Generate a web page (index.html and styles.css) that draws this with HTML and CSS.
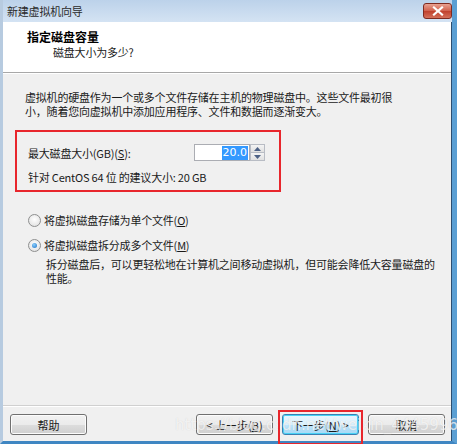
FILE: index.html
```html
<!DOCTYPE html>
<html lang="zh-CN">
<head>
<meta charset="utf-8">
<title>新建虚拟机向导</title>
<link rel="stylesheet" href="styles.css">
</head>
<body>
<div class="window">
  <div class="titlebar">
    <span class="title">新建虚拟机向导</span>
    <span class="close"><svg width="12" height="10" viewBox="0 0 12 10"><path d="M2 1.5 L10 8.5 M10 1.5 L2 8.5" stroke="#fff" stroke-width="2.2" stroke-linecap="square"/></svg></span>
  </div>
  <div class="client">
    <div class="header">
      <div class="h-title">指定磁盘容量</div>
      <div class="h-sub">磁盘大小为多少?</div>
    </div>
    <div class="body">
      <p class="intro"><span>虚拟机的硬盘作为一个或多个文件存储在主机的物理磁盘中。这些文件最初很</span><span>小，随着您向虚拟机中添加应用程序、文件和数据而逐渐变大。</span></p>
      <div class="sizebox">
        <div class="size-row">
          <span class="label">最大磁盘大小(GB)(<u>S</u>):</span>
          <div class="spinner">
            <div class="spin-input"><span class="sel">20.0</span></div>
            <div class="spin-btns">
              <span class="spin-up"><svg width="7" height="4" viewBox="0 0 7 4"><path d="M0 4 L3.5 0 L7 4 Z" fill="#4d6185"/></svg></span>
              <span class="spin-down"><svg width="7" height="4" viewBox="0 0 7 4"><path d="M0 0 L3.5 4 L7 0 Z" fill="#4d6185"/></svg></span>
            </div>
          </div>
        </div>
        <div class="hint">针对 CentOS 64 位 的建议大小: 20 GB</div>
      </div>
      <div class="radios">
        <div class="radio-row"><span class="radio"></span><span>将虚拟磁盘存储为单个文件(<u>O</u>)</span></div>
        <div class="radio-row"><span class="radio checked"></span><span>将虚拟磁盘拆分成多个文件(<u>M</u>)</span></div>
        <p class="desc"><span>拆分磁盘后，可以更轻松地在计算机之间移动虚拟机，但可能会降低大容量磁盘的</span><span>性能。</span></p>
      </div>
    </div>
    <div class="footer">
      <button class="btn">帮助</button>
      <div class="nav">
        <button class="btn">&lt; 上一步(<u>B</u>)</button>
        <button class="btn default">下一步(<u>N</u>) &gt;</button>
        <button class="btn">取消</button>
      </div>
      <span class="watermark">https://blog.csdn.net/weixin_44459966</span>
    </div>
  </div>
</div>
</body>
</html>
```

FILE: styles.css
```css
* { box-sizing: border-box; }
html, body { margin: 0; padding: 0; }
body {
  width: 457px;
  height: 444px;
  overflow: hidden;
  background: #ffffff;
  font-family: "Noto Sans CJK SC", "Noto Sans", sans-serif;
  font-size: 11px;
  letter-spacing: -0.2px;
  color: #1a1a1a;
}
.window {
  position: relative;
  width: 457px;
  height: 444px;
  display: flex;
  flex-direction: column;
  background: linear-gradient(#bed3ea, #cfdff0);
  border-left: 3px solid #b7cbe0;
  border-right: 5px solid #5b9fd3;
  border-bottom: 3px solid #3f86c2;
}
.titlebar {
  height: 22px;
  display: flex;
  align-items: center;
  padding-left: 4px;
  background: linear-gradient(#bcd2ea, #d4e3f3);
}
.title {
  color: #2a2a2a;
  line-height: 14px;
}
.close {
  margin-left: auto;
  width: 29px;
  height: 16px;
  display: flex;
  align-items: center;
  justify-content: center;
  border: 1px solid #7e2a20;
  border-radius: 3px;
  background: linear-gradient(#e8a191, #d0604c 50%, #c0402c 51%, #d4705a);
}
.client {
  flex: 1;
  display: flex;
  flex-direction: column;
  background: #f0f0f0;
  border-right: 1px solid #2c4e70;
}
.header {
  height: 51px;
  background: #ffffff;
  border-bottom: 1px solid #a8a8a8;
  box-shadow: 0 1px 0 #ffffff;
  padding: 7px 0 0 24px;
}
.h-title {
  font-weight: bold;
  font-size: 12px;
  line-height: 15px;
  letter-spacing: 0;
  color: #000;
}
.h-sub {
  padding-left: 26px;
  line-height: 15px;
  margin-top: 1px;
}
.body {
  flex: 1;
  padding: 17px 0 0 22px;
}
.intro, .desc {
  margin: 0;
  line-height: 14px;
}
.intro span, .desc span {
  display: block;
  white-space: nowrap;
}
.sizebox {
  width: 266px;
  height: 62px;
  margin: 12px 0 0 -10px;
  border: 2px solid #e8262c;
  padding: 12px 14px 0 11px;
}
.size-row {
  display: flex;
  align-items: center;
  justify-content: space-between;
  height: 17px;
}
.label { line-height: 14px; white-space: nowrap; }
.spinner {
  display: flex;
  flex-shrink: 0;
}
.spin-input {
  width: 56px;
  height: 17px;
  background: #fff;
  border: 1px solid #abadb3;
  display: flex;
  justify-content: flex-end;
  align-items: center;
  padding-right: 1px;
}
.sel {
  background: #3399ff;
  color: #fff;
  font-family: "DejaVu Sans", "Noto Sans", sans-serif;
  font-size: 11px;
  letter-spacing: 0;
  line-height: 14px;
  padding: 0 1px;
}
.spin-btns {
  width: 15px;
  height: 17px;
  display: flex;
  flex-direction: column;
}
.spin-up, .spin-down {
  flex: 1;
  display: flex;
  align-items: center;
  justify-content: center;
  border: 1px solid #b8bcc4;
  background: linear-gradient(#f4f4f4, #e0e0e0);
}
.spin-down { border-top: none; }
.hint {
  margin-top: 9px;
  line-height: 14px;
  white-space: nowrap;
}
.radios {
  margin-top: 21px;
  padding-left: 3px;
}
.radio-row {
  display: flex;
  align-items: center;
  gap: 3px;
  height: 14px;
  line-height: 14px;
  margin-bottom: 11px;
}
.radio {
  width: 13px;
  height: 13px;
  border-radius: 50%;
  border: 1px solid #8e8f8f;
  background: radial-gradient(circle at 50% 40%, #ffffff, #dcdcdc);
  display: flex;
  align-items: center;
  justify-content: center;
}
.radio.checked::after {
  content: "";
  width: 5px;
  height: 5px;
  border-radius: 50%;
  background: radial-gradient(circle at 40% 35%, #8ad0ff, #1d6fc2);
}
.desc {
  padding-left: 18px;
  margin-top: -6px;
}
u { text-decoration: underline; text-underline-offset: 1px; }
.footer {
  position: relative;
  height: 36px;
  border-top: 1px solid #d0d0d0;
  box-shadow: inset 0 1px 0 #ffffff;
  display: flex;
  align-items: flex-start;
  padding: 8px 0 0 7px;
}
.nav {
  margin-left: auto;
  margin-right: 6px;
  display: flex;
  gap: 9px;
}
.btn {
  width: 77px;
  height: 21px;
  padding: 0;
  font-family: "Noto Sans CJK SC", sans-serif;
  font-size: 11px;
  line-height: 14px;
  color: #1a1a1a;
  border: 1px solid #707070;
  border-radius: 3px;
  background: linear-gradient(#f2f2f2, #ebebeb 50%, #dddddd 51%, #cfcfcf);
  box-shadow: inset 0 0 0 1px #fcfcfc;
}
.btn.default {
  position: relative;
  border-color: #3c7fb1;
  background: linear-gradient(#eaf6fd, #d9f0fc 50%, #bee6fd 51%, #a7d9f5);
  box-shadow: inset 0 0 0 1px #48d2f5;
}
.btn.default::after {
  content: "";
  position: absolute;
  left: -5px;
  right: -5px;
  top: -5px;
  bottom: -11px;
  border: 2px solid #e8262c;
  z-index: 3;
}
.watermark {
  position: absolute;
  left: 172px;
  top: 10px;
  font-family: "DejaVu Sans", sans-serif;
  font-size: 15px;
  letter-spacing: 0;
  color: rgba(255, 255, 255, 0.7);
  text-shadow: 0 0 1px rgba(140, 140, 140, 0.3);
  white-space: nowrap;
  pointer-events: none;
  z-index: 2;
}
```
